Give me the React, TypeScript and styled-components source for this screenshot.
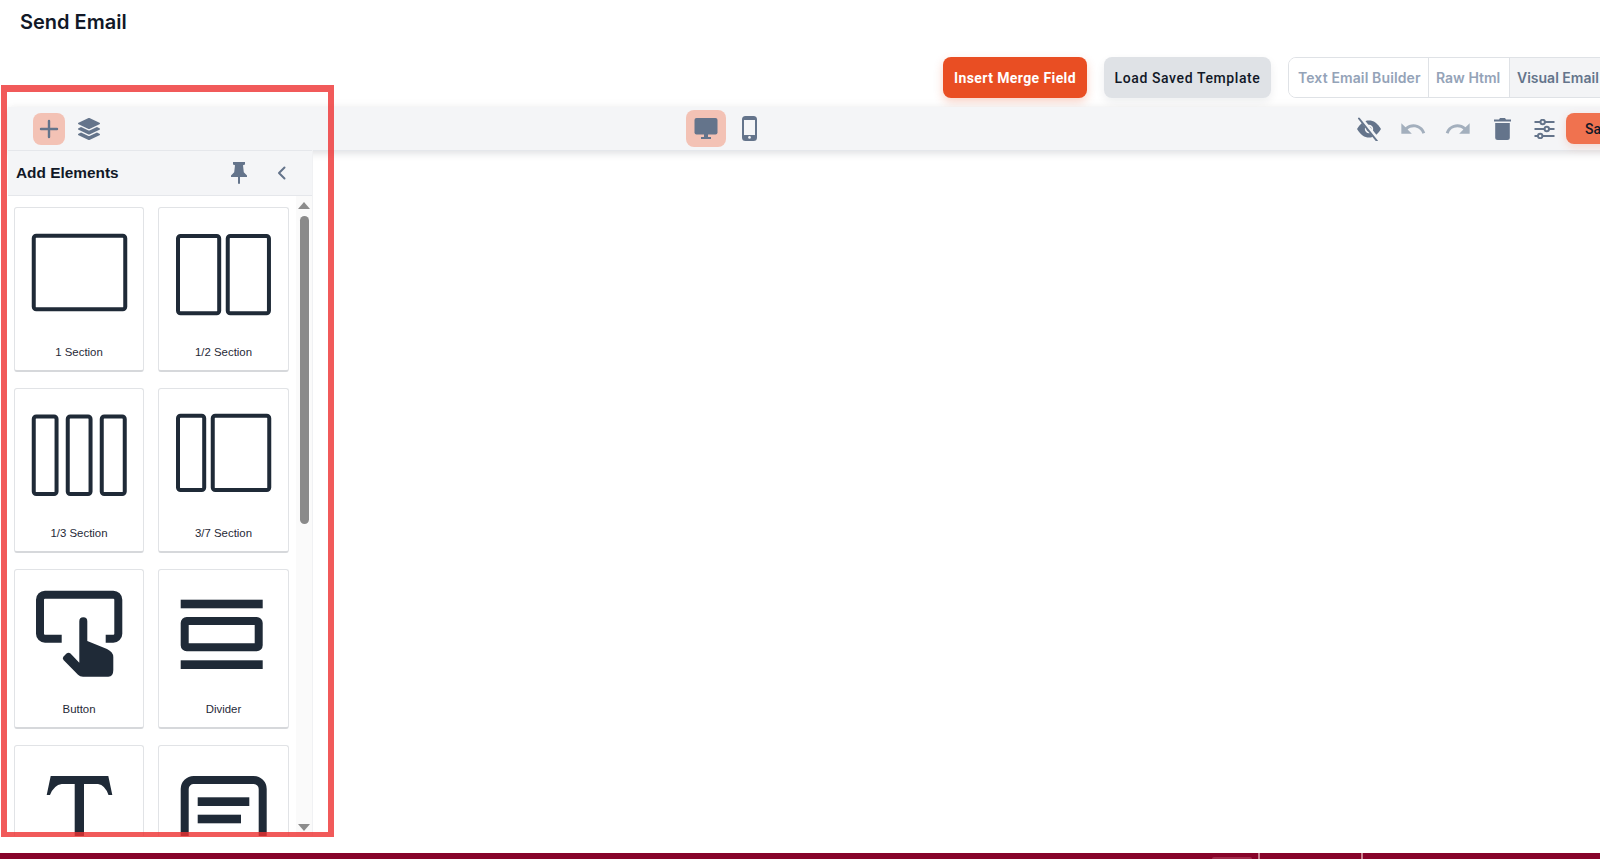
import React from "react";
import styled, { createGlobalStyle } from "styled-components";
import { FaLayerGroup } from "react-icons/fa";
import { MdRedo, MdUndo } from "react-icons/md";

const Global = createGlobalStyle`
  html, body { margin: 0; padding: 0; background: #fff; overflow: hidden; }
  body { font-family: Inter, "Liberation Sans", Arial, sans-serif; }
  * { box-sizing: border-box; }
`;

const Page = styled.div`
  position: relative;
  width: 1600px;
  height: 859px;
  display: flex;
  flex-direction: column;
  overflow: hidden;
`;
const TitleRow = styled.div`
  height: 57px;
  padding: 10px 0 0 20px;
  flex: none;
`;
const Title = styled.h1`
  margin: 0;
  font-size: 20px;
  line-height: 24px;
  font-weight: 600;
  color: #111827;
`;
const ActionRow = styled.div`
  flex: none;
  height: 41px;
  display: flex;
  gap: 17px;
  padding-left: 943px;
  width: 1800px;
`;
const PrimaryButton = styled.button`
  width: 144px;
  border: 0;
  border-radius: 8px;
  background: #e94e23;
  color: #fff;
  font: 700 14px/20px Roboto, sans-serif;
  letter-spacing: 0.4px;
  box-shadow: 0 4px 10px rgba(233, 78, 35, 0.25);
  padding: 0;
`;
const GrayButton = styled.button`
  width: 167px;
  border: 0;
  border-radius: 8px;
  background: #dfe2e6;
  color: #111827;
  font: 500 14px/20px Roboto, sans-serif;
  letter-spacing: 0.6px;
  box-shadow: 0 4px 10px rgba(17, 24, 39, 0.07);
  padding: 0;
`;
const Tabs = styled.div`
  display: flex;
  border: 1px solid #dfe2e6;
  border-radius: 8px;
  overflow: hidden;
`;
const Tab = styled.div<{ $on?: boolean; $w: number; $first?: boolean }>`
  width: ${(p) => p.$w}px;
  display: flex;
  align-items: center;
  padding-left: ${(p) => (p.$first ? 9 : 7)}px;
  font: 600 14px/20px Inter, sans-serif;
  letter-spacing: ${(p) => (p.$first ? 0.12 : 0)}px;
  white-space: nowrap;
  color: ${(p) => (p.$on ? "#64748b" : "#94a3b8")};
  background: ${(p) => (p.$on ? "#f3f4f6" : "#fff")};
  border-left: ${(p) => (p.$first ? "0" : "1px solid #dfe2e6")};
`;
const Toolbar = styled.div`
  flex: none;
  margin: 9px 0 0 8px;
  width: 1700px;
  height: 44px;
  display: grid;
  grid-template-columns: 678px 100px 1fr;
  background: #f4f5f7;
  border-bottom: 1px solid #e5e7eb;
  box-shadow: 0 3px 7px rgba(17, 24, 39, 0.12), 0 -4px 8px rgba(17, 24, 39, 0.02);
`;
const Group = styled.div<{ $pad?: number }>`
  display: flex;
  align-items: center;
  padding-left: ${(p) => p.$pad ?? 0}px;
`;
const ActiveBox = styled.div<{ $w: number; $h: number }>`
  width: ${(p) => p.$w}px;
  height: ${(p) => p.$h}px;
  flex: none;
  border-radius: 8px;
  background: #f3c2b5;
  display: flex;
  align-items: center;
  justify-content: center;
  color: #64748b;
`;
const IconSlot = styled.div<{ $w?: number; $muted?: boolean }>`
  width: ${(p) => p.$w ?? 44}px;
  flex: none;
  display: flex;
  align-items: center;
  justify-content: center;
  color: ${(p) => (p.$muted ? "#a3afbd" : "#64748b")};
`;
const SaveButton = styled.button`
  width: 90px;
  height: 31px;
  flex: none;
  margin-left: 2px;
  padding: 0 0 0 19px;
  border: 0;
  border-radius: 8px;
  text-align: left;
  background: #f0724f;
  color: #111827;
  font: 500 14px/20px Roboto, sans-serif;
  box-shadow: 0 3px 8px rgba(240, 114, 79, 0.22);
`;
const Panel = styled.aside`
  position: relative;
  flex: none;
  margin: -1px 0 0 8px;
  width: 305px;
  height: 686px;
  display: flex;
  flex-direction: column;
  background: #fff;
  border-right: 1px solid #f0f1f3;
`;
const PanelHeader = styled.div`
  flex: none;
  height: 46px;
  display: flex;
  align-items: center;
  padding: 0 1px 0 8px;
  background: #f4f5f7;
  border-top: 1px solid #e5e7eb;
  border-bottom: 1px solid #e5e7eb;
`;
const PanelTitle = styled.div`
  flex: 1;
  font: 700 15.4px/20px "Liberation Sans", Arial, sans-serif;
  color: #111827;
`;
const HeaderIcon = styled.div<{ $w: number }>`
  width: ${(p) => p.$w}px;
  display: flex;
  justify-content: center;
  color: #64748b;
`;
const PanelBody = styled.div`
  flex: 1;
  min-height: 0;
  display: flex;
`;
const CardClip = styled.div`
  width: 288px;
  flex: none;
  overflow: hidden;
  padding: 11px 0 0 6px;
`;
const CardGrid = styled.div`
  display: grid;
  grid-template-columns: 130px 131px;
  column-gap: 14px;
  row-gap: 16px;
`;
const Card = styled.div<{ $h: number }>`
  height: ${(p) => p.$h}px;
  background: #fff;
  border: 1px solid #e1e3e6;
  border-bottom: 2px solid #d6d8db;
  border-radius: 3px;
  display: flex;
  flex-direction: column;
  align-items: center;
`;
const CardLabel = styled.div`
  font: 11.4px/16px "Liberation Sans", Arial, sans-serif;
  color: #1f2937;
`;
const Art = styled.svg<{ $h: number }>`
  display: block;
  flex: none;
  width: 128px;
  height: ${(p) => p.$h}px;
  color: #1f2a37;
`;
const Scroll = styled.div`
  width: 16px;
  flex: none;
  background: #fafafa;
  display: flex;
  flex-direction: column;
  align-items: center;
  padding-top: 6px;
  height: 640px;
`;
const ArrowUp = styled.div`
  flex: none;
  width: 0;
  height: 0;
  border-left: 6px solid transparent;
  border-right: 6px solid transparent;
  border-bottom: 7px solid #8c8c8c;
`;
const ArrowDown = styled(ArrowUp)`
  border-bottom: 0;
  border-top: 7px solid #8c8c8c;
  margin-top: 300px;
`;
const Thumb = styled.div`
  flex: none;
  width: 9px;
  height: 308px;
  margin-top: 7px;
  border-radius: 5px;
  background: #8a8a8a;
`;
const Spacer = styled.div`
  flex: 1;
`;
const BottomBar = styled.div`
  flex: none;
  height: 6px;
  display: grid;
  grid-template-columns: 1212px 46px 103px 1fr;
  background: #87042a;
`;
const BarCell = styled.div<{ $line?: boolean }>`
  border-left: ${(p) => (p.$line ? "2px solid #c9808f" : "0")};
`;
const BarTab = styled.div`
  width: 40px;
  height: 2px;
  margin-top: 4px;
  border-radius: 3px 3px 0 0;
  background: #a12b4c;
`;
const Highlight = styled.div`
  position: absolute;
  left: 1px;
  top: 85px;
  width: 333px;
  height: 752px;
  border: solid rgba(237, 49, 49, 0.8);
  border-width: 7px 6px 5px 6px;
  pointer-events: none;
`;

const Frame = ({ x, y, w, h }: { x: number; y: number; w: number; h: number }) => (
  <rect x={x} y={y} width={w} height={h} rx="2.5" fill="none" stroke="currentColor" strokeWidth="4" />
);

const ArtBox = ({ h, children }: { h: number; children: React.ReactNode }) => (
  <Art $h={h} viewBox={`0 0 128 ${h}`}>
    {children}
  </Art>
);

const Plus = () => (
  <svg width="20" height="20" viewBox="0 0 20 20" fill="none" stroke="currentColor" strokeWidth="2.4" strokeLinecap="round">
    <path d="M10 2v16M2 10h16" />
  </svg>
);
const Monitor = () => (
  <svg width="24" height="22" viewBox="0 0 24 22" fill="currentColor">
    <rect x="0.5" y="0" width="23" height="16.5" rx="2" />
    <path d="M10 16h4v3h3v2H7v-2h3z" />
  </svg>
);
const Phone = () => (
  <svg width="15" height="25" viewBox="0 0 15 25">
    <rect x="1" y="1" width="13" height="23" rx="2.5" fill="none" stroke="currentColor" strokeWidth="2" />
    <rect x="1" y="19" width="13" height="5" rx="1.5" fill="currentColor" />
    <circle cx="7.5" cy="21.4" r="1.3" fill="#f4f5f7" />
    <rect x="1" y="1" width="13" height="3" rx="1.5" fill="currentColor" />
  </svg>
);
const EyeOff = () => (
  <svg width="26" height="24" viewBox="0 0 26 24">
    <path d="M1 12C4.500 6 8.500 3.500 13 3.500S21.500 6 25 12c-3.500 6-7.500 8.500-12 8.500S4.500 18 1 12z" fill="currentColor" />
    <circle cx="13" cy="12" r="4.200" fill="#f4f5f7" />
    <circle cx="13" cy="12" r="2.500" fill="currentColor" />
    <path d="M4 0.500 22 23" stroke="#f4f5f7" strokeWidth="4" />
    <path d="M3 1.500 21 24" stroke="currentColor" strokeWidth="2" strokeLinecap="round" />
  </svg>
);
const Trash = () => (
  <svg width="17" height="22" viewBox="0 0 17 22" fill="currentColor">
    <path d="M6 0h5l1 1.500h5V3.500H0V1.500h5z" />
    <path d="M1.200 5h14.600v14.500a2.500 2.500 0 0 1-2.500 2.500H3.700a2.500 2.500 0 0 1-2.500-2.500z" />
  </svg>
);
const Sliders = () => (
  <svg width="21" height="20" viewBox="0 0 21 20" fill="none" stroke="currentColor" strokeWidth="2">
    <path d="M0.500 3h6M11 3h9.500M0.500 10h10M15 10h5.500M0.500 17h3.500M8.500 17h12" />
    <circle cx="8.700" cy="3" r="2.200" />
    <circle cx="12.800" cy="10" r="2.200" />
    <circle cx="6.200" cy="17" r="2.200" />
  </svg>
);
const Pin = () => (
  <svg width="18" height="22" viewBox="0 0 18 22" fill="currentColor">
    <path d="M3 0h12v2.500l-2 .8.800 7L17 13.500V15H1v-1.500l3.200-3.200.8-7-2-.8z" />
    <rect x="8" y="14" width="2" height="8" rx="1" />
  </svg>
);
const ChevronLeft = () => (
  <svg width="10" height="14" viewBox="0 0 10 14" fill="none" stroke="currentColor" strokeWidth="2" strokeLinecap="round" strokeLinejoin="round">
    <path d="M7.500 1.500 2 7l5.500 5.500" />
  </svg>
);

export default function App() {
  return (
    <Page>
      <Global />
      <TitleRow>
        <Title>Send Email</Title>
      </TitleRow>
      <ActionRow>
        <PrimaryButton>Insert Merge Field</PrimaryButton>
        <GrayButton>Load Saved Template</GrayButton>
        <Tabs>
          <Tab $w={139} $first>
            Text Email Builder
          </Tab>
          <Tab $w={81}>Raw Html</Tab>
          <Tab $w={160} $on>
            Visual Email Builder
          </Tab>
        </Tabs>
      </ActionRow>
      <Toolbar>
        <Group $pad={25}>
          <ActiveBox $w={32} $h={32}>
            <Plus />
          </ActiveBox>
          <IconSlot $w={48}>
            <FaLayerGroup size={22} />
          </IconSlot>
        </Group>
        <Group>
          <ActiveBox $w={40} $h={37}>
            <Monitor />
          </ActiveBox>
          <IconSlot $w={47}>
            <Phone />
          </IconSlot>
        </Group>
        <Group $pad={561}>
          <IconSlot>
            <EyeOff />
          </IconSlot>
          <IconSlot $muted>
            <MdUndo size={28} />
          </IconSlot>
          <IconSlot $w={45} $muted>
            <MdRedo size={28} />
          </IconSlot>
          <IconSlot $w={45}>
            <Trash />
          </IconSlot>
          <IconSlot $w={39}>
            <Sliders />
          </IconSlot>
          <SaveButton>Save</SaveButton>
        </Group>
      </Toolbar>
      <Panel>
        <PanelHeader>
          <PanelTitle>Add Elements</PanelTitle>
          <HeaderIcon $w={28}>
            <Pin />
          </HeaderIcon>
          <HeaderIcon $w={58}>
            <ChevronLeft />
          </HeaderIcon>
        </PanelHeader>
        <PanelBody>
          <CardClip>
            <CardGrid>
              <Card $h={165}>
                <ArtBox h={136}>
                  <Frame x={18.75} y={27.75} w={91.5} h={73.5} />
                </ArtBox>
                <CardLabel>1 Section</CardLabel>
              </Card>
              <Card $h={165}>
                <ArtBox h={136}>
                  <Frame x={18} y={28} w={41.2} h={77.2} />
                  <Frame x={67.75} y={28} w={41.2} h={77.2} />
                </ArtBox>
                <CardLabel>1/2 Section</CardLabel>
              </Card>
              <Card $h={165}>
                <ArtBox h={136}>
                  <Frame x={18.75} y={27.5} w={22.8} h={77.5} />
                  <Frame x={52.75} y={27.5} w={22.8} h={77.5} />
                  <Frame x={86.75} y={27.5} w={23} h={77.5} />
                </ArtBox>
                <CardLabel>1/3 Section</CardLabel>
              </Card>
              <Card $h={165}>
                <ArtBox h={136}>
                  <Frame x={18} y={26.75} w={26.2} h={74.2} />
                  <Frame x={52.75} y={26.75} w={56.5} h={74.2} />
                </ArtBox>
                <CardLabel>3/7 Section</CardLabel>
              </Card>
              <Card $h={160}>
                <ArtBox h={131}>
                  <path
                    d="M46.7 68.7H30a5 5 0 0 1-5-5V29.7a5 5 0 0 1 5-5H98.3a5 5 0 0 1 5 5V63.7a5 5 0 0 1-5 5H90.700"
                    fill="none"
                    stroke="currentColor"
                    strokeWidth="8"
                  />
                  <path
                    d="M64.300 51.300a4 4 0 0 1 8 0V71L92 79q6.300 3 6.300 8V100q0 6.700-5 6.700H68q-3 0-5-2L48.500 90q-1.500-2 0-3.500l3-3q2-1.500 4 0L64.300 92.700Z"
                    fill="currentColor"
                  />
                </ArtBox>
                <CardLabel>Button</CardLabel>
              </Card>
              <Card $h={160}>
                <ArtBox h={131}>
                  <rect x="20.700" y="29.700" width="82" height="8.600" fill="currentColor" />
                  <rect x="24.700" y="51" width="74" height="26.300" rx="2" fill="none" stroke="currentColor" strokeWidth="8" />
                  <rect x="20.700" y="90.300" width="82" height="8.700" fill="currentColor" />
                </ArtBox>
                <CardLabel>Divider</CardLabel>
              </Card>
              <Card $h={160}>
                <ArtBox h={131}>
                  <path
                    d="M35.700 30H93.300L97.300 49H93.500Q90 39 83 38H69V131H59.700V38H46.700Q39 39 35 49H31.700Z"
                    fill="currentColor"
                  />
                </ArtBox>
              </Card>
              <Card $h={160}>
                <ArtBox h={131}>
                  <path
                    d="M24.700 131V43a9 9 0 0 1 9-9H93.700a9 9 0 0 1 9 9V131"
                    fill="none"
                    stroke="currentColor"
                    strokeWidth="8"
                  />
                  <rect x="37.700" y="51.300" width="51.600" height="8.700" fill="currentColor" />
                  <rect x="37.700" y="68.700" width="43.300" height="8.600" fill="currentColor" />
                </ArtBox>
              </Card>
            </CardGrid>
          </CardClip>
          <Scroll>
            <ArrowUp />
            <Thumb />
            <ArrowDown />
          </Scroll>
        </PanelBody>
      </Panel>
      <Spacer />
      <BottomBar>
        <BarCell>
          <span />
        </BarCell>
        <BarCell>
          <BarTab />
        </BarCell>
        <BarCell $line />
        <BarCell $line />
      </BottomBar>
      <Highlight />
    </Page>
  );
}
